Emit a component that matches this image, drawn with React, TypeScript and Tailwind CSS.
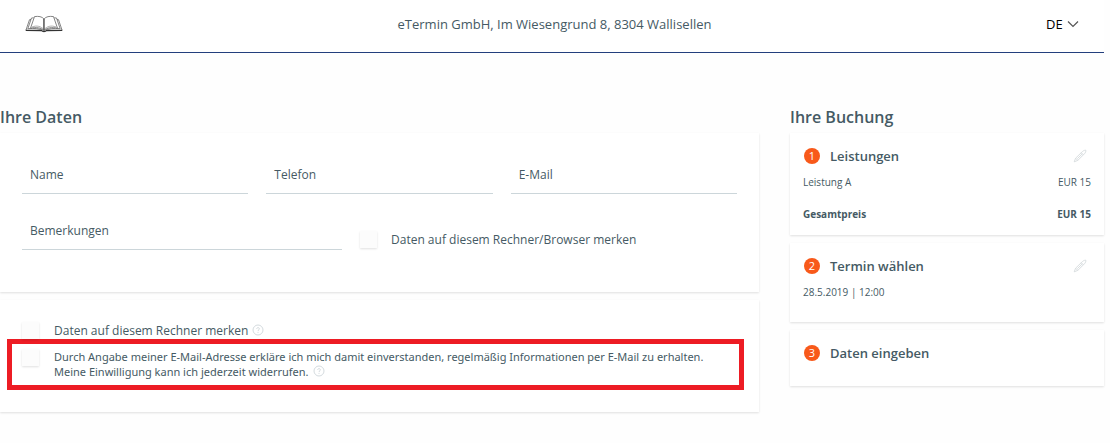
import React from 'react';

interface FieldProps {
  id: string;
  label: string;
  type?: string;
}

const BookLogo: React.FC = () => (
  <svg width="38" height="18" viewBox="0 0 38 18" fill="none" stroke="#666" strokeWidth="0.8" strokeLinejoin="round" aria-label="Logo">
    <path d="M19 4 C17 1.5 13.5 1 9.5 1.6 L5.5 13.2 C11 12 16 12.6 19 15.4 Z" fill="#fff" />
    <path d="M19 4 C21 1.5 24.5 1 28.5 1.6 L32.5 13.2 C27 12 22 12.6 19 15.4 Z" fill="#fff" />
    <path d="M8.7 2.8 L6.5 3 L2.8 13.7 C9 13 15 13.6 18.6 15.6" />
    <path d="M29.3 2.8 L31.5 3 L35.2 13.7 C29 13 23 13.6 19.4 15.6" />
    <path d="M6 4.5 L4.5 4.7 L1 15 M32 4.5 L33.5 4.7 L37 15" />
    <path d="M7 12 C12 10 16 11.5 19 14.5 C22 11.5 26 10 31 12" stroke="#999" />
    <path d="M0.7 15.3 L16.5 15.5 C17.5 17 20.5 17 21.5 15.5 L37.3 15.3" stroke="#333" strokeWidth="1.3" />
    <path d="M19 4 V15.4" stroke="#333" />
  </svg>
);

const PencilIcon: React.FC = () => (
  <svg width="14" height="14" viewBox="0 0 14 14" fill="none" stroke="#d5dadd" strokeWidth="0.9" strokeLinejoin="round">
    <path d="M1.2 12.8 L2.6 9.2 L9.4 2.6 C10.6 1.5 12 1 12.8 1.2 C13.1 2.3 12.5 3.7 11.4 4.8 L4.8 11.4 Z" />
    <path d="M2.6 9.2 L4.8 11.4 M8.2 3.7 L10.3 5.8 M4.3 9.7 L9.4 4.7" />
  </svg>
);

const HelpIcon: React.FC = () => (
  <svg className="ml-1 inline-block align-[-1px]" width="12" height="12" viewBox="0 0 12 12" fill="none" stroke="#cfd6da" strokeWidth="0.9">
    <circle cx="6" cy="6" r="5" />
    <path d="M4.7 4.9 C4.7 3.2 7.4 3.2 7.4 4.8 C7.4 5.8 6 5.8 6 7 M6 7.9 V8.9" />
  </svg>
);

// label sits on top of the input, underline only
const Field: React.FC<FieldProps> = ({ id, label, type = 'text' }) => (
  <div className="grid">
    <label htmlFor={id} className="pointer-events-none z-10 col-start-1 row-start-1 pl-2 pt-[5px] leading-4">
      {label}
    </label>
    <input
      id={id}
      type={type}
      className="col-start-1 row-start-1 h-8 w-full border-b border-[#ccd6da] bg-transparent px-2 outline-none"
    />
  </div>
);

const Check: React.FC<{ id: string }> = ({ id }) => (
  <input
    id={id}
    type="checkbox"
    className="size-[17px] shrink-0 appearance-none bg-[#fcfcfc] shadow-[0_1px_2px_rgba(0,0,0,0.12)] checked:bg-[#f8591a]"
  />
);

const card = 'bg-white shadow-[0_1px_2px_rgba(0,0,0,0.12)]';

const StepTitle: React.FC<{ step: number; title: string; editable?: boolean }> = ({ step, title, editable }) => (
  <div className="flex h-[18px] items-center pl-px">
    <span className="flex size-4 items-center justify-center rounded-full bg-[#f8591a] text-[11px] leading-4 text-white">
      {step}
    </span>
    <h3 className="ml-2.5 flex-1 text-[13px] font-semibold leading-[18px]">{title}</h3>
    {editable && (
      <button type="button" aria-label={`${title} bearbeiten`} className="mr-1">
        <PencilIcon />
      </button>
    )}
  </div>
);

const App: React.FC = () => {
  return (
    <div className="min-h-screen bg-[#fefefe] pr-1.5 font-['Open_Sans',sans-serif] text-[12px] leading-[15px] text-[#455a64]">
      <header className="flex h-[53px] items-center justify-between border-b border-[#233f7d] bg-white px-[25px] pb-1">
        <BookLogo />
        <p className="text-[13px]">eTermin GmbH, Im Wiesengrund 8, 8304 Wallisellen</p>
        <div className="flex items-center">
          <select aria-label="Sprache" className="appearance-none bg-transparent pr-4 text-[13px] text-black outline-none">
            <option>DE</option>
          </select>
          <svg className="pointer-events-none -ml-3" width="12" height="8" viewBox="0 0 12 8" fill="none" stroke="#555" strokeWidth="1.2">
            <path d="M1 1.5 L6 6.5 L11 1.5" />
          </svg>
        </div>
      </header>

      <div className="flex gap-[31px] pt-[54px]">
        {/* Form */}
        <main className="min-w-0 flex-1">
          <h2 className="mb-1.5 text-[16px] font-semibold leading-5">Ihre Daten</h2>
          <section className={`${card} px-[22px] pb-[42px] pt-[29px]`}>
            <div className="grid grid-cols-3 gap-[18px]">
              <Field id="name" label="Name" />
              <Field id="phone" label="Telefon" type="tel" />
              <Field id="email" label="E-Mail" type="email" />
            </div>
            <div className="mt-6 flex items-end gap-[18px]">
              <div className="w-80">
                <Field id="remarks" label="Bemerkungen" />
              </div>
              <div className="mb-0.5 flex items-center gap-[14px]">
                <Check id="remember-browser" />
                <label htmlFor="remember-browser">Daten auf diesem Rechner/Browser merken</label>
              </div>
            </div>
          </section>

          <section className={`${card} mt-2 pb-[22px] pl-[7px] pr-[15px] pt-[22px]`}>
            <div className="flex items-center gap-[15px] pl-[15px]">
              <Check id="remember" />
              <div>
                <label htmlFor="remember">Daten auf diesem Rechner merken</label>
                <HelpIcon />
              </div>
            </div>
            <div className="flex items-start gap-[15px] border-[5px] border-[#ed1c24] pb-1.5 pl-[10px] pt-[5px]">
              <Check id="newsletter" />
              <div className="font-['Noto_Sans',sans-serif] text-[11px]">
                <label htmlFor="newsletter">
                  Durch Angabe meiner E-Mail-Adresse erkläre ich mich damit einverstanden, regelmäßig Informationen per E-Mail zu erhalten.
                  <br />
                  Meine Einwilligung kann ich jederzeit widerrufen.
                </label>
                <HelpIcon />
              </div>
            </div>
          </section>
        </main>

        {/* Booking summary */}
        <aside className="w-[314px] shrink-0">
          <h2 className="mb-1.5 text-[16px] font-semibold leading-5">Ihre Buchung</h2>
          <div className="flex flex-col gap-2">
            <section className={`${card} px-[13px] pb-[13px] pt-[14px]`}>
              <StepTitle step={1} title="Leistungen" editable />
              <dl className="mt-[9px] flex flex-col gap-4 text-[10px] leading-4">
                <div className="flex justify-between">
                  <dt>Leistung A</dt>
                  <dd>EUR 15</dd>
                </div>
                <div className="flex justify-between font-bold">
                  <dt>Gesamtpreis</dt>
                  <dd>EUR 15</dd>
                </div>
              </dl>
            </section>
            <section className={`${card} px-[13px] pb-[22px] pt-[14px]`}>
              <StepTitle step={2} title="Termin wählen" editable />
              <p className="mt-[9px] text-[10px] leading-4">28.5.2019 | 12:00</p>
            </section>
            <section className={`${card} px-[13px] pb-6 pt-[14px]`}>
              <StepTitle step={3} title="Daten eingeben" />
            </section>
          </div>
        </aside>
      </div>
    </div>
  );
};

export default App;
